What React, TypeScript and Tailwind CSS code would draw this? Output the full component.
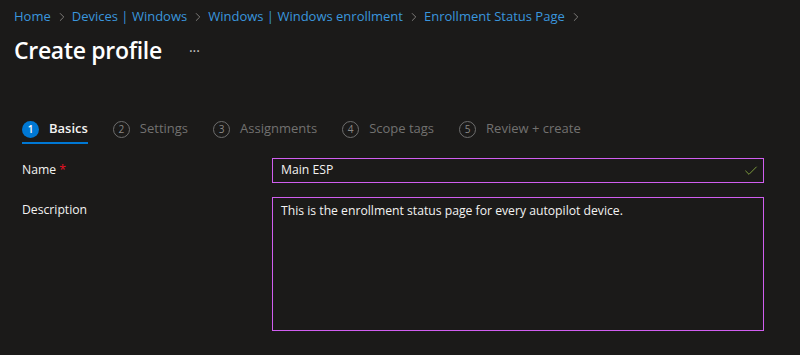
import { Check, ChevronRight } from 'lucide-react';

const crumbs = ['Home', 'Devices | Windows', 'Windows | Windows enrollment', 'Enrollment Status Page'];

const steps = ['Basics', 'Settings', 'Assignments', 'Scope tags', 'Review + create'];

function Step({ n, label, active }: { n: number; label: string; active?: boolean }) {
  return (
    <div className={`flex h-[28px] items-center gap-[10px] border-b-2 ${active ? 'border-[#0078d4]' : 'border-transparent'}`}>
      {active ? (
        <span className="flex h-[17px] w-[17px] items-center justify-center rounded-full bg-[#0078d4] text-[10px] font-semibold text-white">
          {n}
        </span>
      ) : (
        <span className="flex h-[17px] w-[17px] items-center justify-center rounded-full border border-[#6e6e6e] text-[10px] text-[#8a8886]">
          {n}
        </span>
      )}
      <span className={active ? 'font-semibold text-[#f3f2f1]' : 'text-[#727170]'}>{label}</span>
    </div>
  );
}

export default function App() {
  return (
    <div className="h-[355px] w-[800px] overflow-hidden bg-[#1b1a19] font-['Open_Sans',sans-serif] text-[13px] text-[#f3f2f1]">
      {/* breadcrumb */}
      <nav className="flex h-[33px] items-center gap-[3px] pl-[14px] text-[13px] text-[#3a96dd]">
        {crumbs.map((c) => (
          <span key={c} className="flex items-center gap-[4px]">
            <span>{c}</span>
            <ChevronRight className="h-[14px] w-[14px] text-[#8a8886]" strokeWidth={1.5} />
          </span>
        ))}
      </nav>

      {/* title */}
      <div className="flex h-[34px] items-center pl-[14px]">
        <h1 className="text-[23px] font-semibold tracking-[-0.3px] text-white">Create profile</h1>
        <span className="ml-[27px] text-[14px] text-[#c8c6c4]">···</span>
      </div>

      {/* steps */}
      <div className="mt-[49px] flex gap-[25px] pl-[22px]">
        {steps.map((s, i) => (
          <Step key={s} n={i + 1} label={s} active={i === 0} />
        ))}
      </div>

      {/* form */}
      <div className="mt-[14px] flex flex-col gap-[14px] pl-[22px] pr-[36px] text-[12.2px]">
        <div className="flex items-center">
          <label className="w-[250px]">
            Name <span className="text-[#e81123]">*</span>
          </label>
          <div className="flex h-[25px] flex-1 items-center justify-between border border-[#d05ef0] pl-[8px] pr-[4px]">
            <span>Main ESP</span>
            <Check className="h-[16px] w-[16px] text-[#7d9b3c]" strokeWidth={1.5} />
          </div>
        </div>
        <div className="flex items-start">
          <label className="w-[250px] pt-[4px]">Description</label>
          <div className="h-[134px] flex-1 border border-[#d05ef0] px-[8px] pt-[4px]">
            This is the enrollment status page for every autopilot device.
          </div>
        </div>
      </div>
    </div>
  );
}
